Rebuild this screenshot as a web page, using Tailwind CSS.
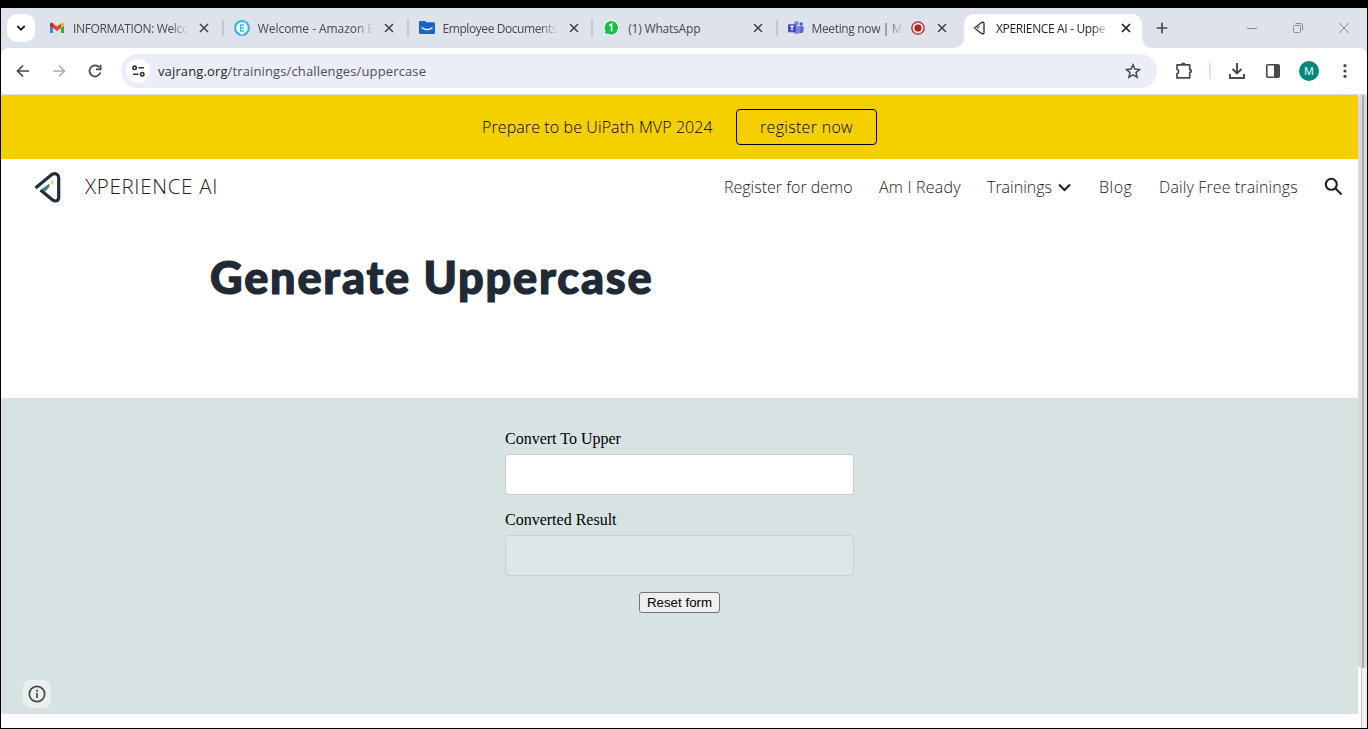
<!DOCTYPE html>
<html lang="en">
<head>
<meta charset="utf-8">
<title>XPERIENCE AI - Uppercase</title>
<script src="https://cdn.jsdelivr.net/npm/@tailwindcss/browser@4"></script>
</head>
<body class="bg-black h-[729px] w-[1368px] overflow-hidden pt-2 px-px pb-px font-['Open_Sans',sans-serif]">
<div class="flex h-[720px] w-[1366px] flex-col bg-white">

  <!-- Tab strip -->
  <div class="flex h-10 shrink-0 items-start bg-[#dee2ea] text-[12px] text-[#45494c]">
    <div class="ml-1.5 mt-1.5 flex size-7 items-center justify-center rounded-[10px] bg-white">
      <svg class="size-[10px]" viewBox="0 0 10 10" fill="none" stroke="#1f1f1f" stroke-width="1.8"><path d="M1.3 3 5 6.700 8.700 3"/></svg>
    </div>
    <div class="ml-1 flex h-10 w-[184.750px] items-center pl-2.5">
      <svg class="size-4 shrink-0" viewBox="0 0 16 16"><path fill="#4285f4" d="M1 4.500v8.500h3V7z"/><path fill="#34a853" d="M12 7v6h3V4.500z"/><path fill="#ea4335" d="M4 3.500 8 6.500l4-3V8l-4 3-4-3z"/><path fill="#c5221f" d="M1 4.500C1 2.700 2.800 2.200 4 3.300V8L1 5.800z"/><path fill="#fbbc04" d="M15 4.500C15 2.700 13.200 2.200 12 3.300V8l3-2.200z"/></svg>
      <span class="ml-2 w-[115px] overflow-hidden pt-0.5 whitespace-nowrap tracking-[-0.35px] mask-r-from-85% mask-r-to-100%">INFORMATION: Welco</span>
      <svg class="ml-[11px] size-[10px] shrink-0" viewBox="0 0 10 10" stroke="#3c4043" stroke-width="1.500"><path d="m1 1 8 8M9 1 1 9"/></svg>
      <i class="ml-auto h-4 w-0.5 bg-[#c5c7ca]"></i>
    </div>
    <div class="flex h-10 w-[184.750px] items-center pl-2.5">
      <svg class="size-4 shrink-0" viewBox="0 0 16 16"><circle cx="8" cy="8" r="8" fill="#38b9ee"/><path fill="#fff" d="M8 2.200a5.700 5.700 0 0 1 2.500 10.800L8 15l-2.500-2A5.700 5.700 0 0 1 8 2.200z"/><path fill="none" stroke="#38b9ee" stroke-width="1.300" d="M10.200 5H6.500v6h3.700M6.500 8h3.300"/></svg>
      <span class="ml-2 w-[115px] overflow-hidden pt-0.5 whitespace-nowrap tracking-[-0.05px] mask-r-from-85% mask-r-to-100%">Welcome - Amazon E</span>
      <svg class="ml-[11px] size-[10px] shrink-0" viewBox="0 0 10 10" stroke="#3c4043" stroke-width="1.500"><path d="m1 1 8 8M9 1 1 9"/></svg>
      <i class="ml-auto h-4 w-0.5 bg-[#c5c7ca]"></i>
    </div>
    <div class="flex h-10 w-[184.750px] items-center pl-2.5">
      <svg class="size-4 shrink-0" viewBox="0 0 16 16"><path fill="#1767c9" d="M0 2q0-1 1-1h5l1.500 1.200H15q1 0 1 1V13q0 1-1 1H1q-1 0-1-1z"/><path fill="#1259b4" d="M0 4.500V4h16v.5z"/><path fill="none" stroke="#fff" stroke-width="1.300" d="M2.500 7.500q5.500 4 11 .3"/></svg>
      <span class="ml-2 w-[115px] overflow-hidden pt-0.5 whitespace-nowrap tracking-[-0.42px] mask-r-from-85% mask-r-to-100%">Employee Documents</span>
      <svg class="ml-[11px] size-[10px] shrink-0" viewBox="0 0 10 10" stroke="#3c4043" stroke-width="1.500"><path d="m1 1 8 8M9 1 1 9"/></svg>
      <i class="ml-auto h-4 w-0.5 bg-[#c5c7ca]"></i>
    </div>
    <div class="flex h-10 w-[184.250px] items-center pl-2.5">
      <svg class="size-4 shrink-0" viewBox="0 0 16 16"><path fill="#fff" d="M8.200 0a7.700 7.700 0 1 1-3.600 14.500L.5 15.500l1-4A7.700 7.700 0 0 1 8.200 0z"/><path fill="#0fc144" d="M8.200 1a6.700 6.700 0 1 1-3.400 12.400L2 14l.6-2.800A6.700 6.700 0 0 1 8.200 1z"/><path fill="none" stroke="#fff" stroke-width="1.700" d="M6.300 5.500 8.600 4.200V11.500"/></svg>
      <span class="ml-2 w-[115px] overflow-hidden pl-px pt-0.5 whitespace-nowrap tracking-[-0.2px]">(1) WhatsApp</span>
      <svg class="ml-[11px] size-[10px] shrink-0" viewBox="0 0 10 10" stroke="#3c4043" stroke-width="1.500"><path d="m1 1 8 8M9 1 1 9"/></svg>
      <i class="ml-auto h-4 w-0.5 bg-[#c5c7ca]"></i>
    </div>
    <div class="flex h-10 w-[184px] items-center pl-2.5">
      <svg class="size-4 shrink-0" viewBox="0 0 16 16"><circle cx="8.500" cy="3.300" r="2.300" fill="#7b83eb"/><circle cx="13.200" cy="4" r="1.700" fill="#5059c9"/><path fill="#5b63d3" d="M10 6.300h5.500V10a2.800 2.800 0 0 1-5.500 1z"/><path fill="#7b83eb" d="M5 6.300h7.300V11a3.700 3.700 0 0 1-7.300 0z"/><rect y="4.200" width="8" height="8" rx=".7" fill="#464eb8"/><path fill="none" stroke="#fff" stroke-width="1.200" d="M2 6.300h4M4 6.300v4.200"/></svg>
      <span class="ml-2 w-[92px] overflow-hidden pt-0.5 whitespace-nowrap tracking-[-0.35px] mask-r-from-80% mask-r-to-100%">Meeting now | Mi</span>
      <svg class="ml-[7px] size-[14px] shrink-0" viewBox="0 0 14 14"><circle cx="7" cy="7" r="6.200" fill="none" stroke="#b3261e" stroke-width="1.300"/><circle cx="7" cy="7" r="3.500" fill="#b3261e"/></svg>
      <svg class="ml-[12px] size-[10px] shrink-0" viewBox="0 0 10 10" stroke="#3c4043" stroke-width="1.500"><path d="m1 1 8 8M9 1 1 9"/></svg>
    </div>
    <div class="relative ml-[2.500px] mt-1.5 flex h-[34px] w-[178px] items-center rounded-t-[10px] bg-white pb-1.5 pl-[8px] text-[#1f1f1f]">
      <svg class="absolute -left-[10px] bottom-0 size-[10px]" viewBox="0 0 10 10"><path fill="#fff" d="M10 0v10H0A10 10 0 0 0 10 0z"/></svg>
      <svg class="absolute -right-[10px] bottom-0 size-[10px]" viewBox="0 0 10 10"><path fill="#fff" d="M0 0v10h10A10 10 0 0 1 0 0z"/></svg>
      <svg class="size-4 shrink-0" viewBox="0 0 32 32" fill="none" stroke="#26313d" stroke-width="2.800"><path d="m4 17 15-12q5-2 5 3v17q0 4-5 2L7 18"/><path stroke="#3a7f7c" stroke-width="3" d="m10 17 5-4"/></svg>
      <span class="ml-2 w-[113px] overflow-hidden pt-0.5 whitespace-nowrap tracking-[-0.35px] mask-r-from-85% mask-r-to-100%">XPERIENCE AI - Uppe</span>
      <svg class="ml-[12px] size-[10px] shrink-0" viewBox="0 0 10 10" stroke="#1f1f1f" stroke-width="1.700"><path d="m1 1 8 8M9 1 1 9"/></svg>
    </div>
    <svg class="ml-[14px] mt-[14px] size-3" viewBox="0 0 12 12" stroke="#45494c" stroke-width="1.700"><path d="M6 .7v10.600M.7 6h10.600"/></svg>
    <div class="ml-[79px] mt-[15px] flex items-center gap-[36px]">
      <svg class="size-[10px]" viewBox="0 0 10 10" stroke="#8a8d91"><path d="M0 5.500h10"/></svg>
      <svg class="size-[10px]" viewBox="0 0 10 10" fill="none" stroke="#8a8d91"><rect x=".5" y="2.500" width="7" height="7" rx="1"/><path d="M2.500.5h5q2 0 2 2v5"/></svg>
      <svg class="size-[10px]" viewBox="0 0 10 10" stroke="#8a8d91"><path d="m0 0 10 10M10 0 0 10"/></svg>
    </div>
  </div>

  <!-- Toolbar -->
  <div class="shrink-0 bg-[#dee2ea]">
    <div class="flex h-[47px] items-center rounded-t-lg border-b border-[#d9dbdf] bg-white pl-[15px] pr-[15px]">
      <svg class="size-[14px]" viewBox="0 0 14 14" fill="none" stroke="#45494c" stroke-width="1.700"><path d="M13 7H2M7 1.500 1.500 7 7 12.500"/></svg>
      <svg class="ml-[22px] size-[14px]" viewBox="0 0 14 14" fill="none" stroke="#aeb0b3" stroke-width="1.700"><path d="M1 7h11M7 1.500 12.500 7 7 12.500"/></svg>
      <svg class="ml-[22px] size-[14px]" viewBox="0 0 14 14" fill="none" stroke="#45494c" stroke-width="1.800"><path d="M12.300 8.500A5.500 5.500 0 1 1 11.300 3.500"/><path d="M12.600.8v4.600H8"/></svg>
      <div class="ml-[19px] flex h-[34px] w-[1036px] items-center rounded-full bg-[#ebeef8] pl-[5px] pr-[16px]">
        <div class="flex size-6 items-center justify-center rounded-full bg-white">
          <svg class="h-3 w-[13px]" viewBox="0 0 13 12" fill="none" stroke="#303336" stroke-width="1.600"><circle cx="2.600" cy="2.800" r="1.700"/><path d="M6.500 2.800H12M1 9.200h5.500"/><circle cx="10.200" cy="9.200" r="1.700"/></svg>
        </div>
        <span class="ml-2 pt-0.5 text-[13px] tracking-[0.13px] text-[#4b4f54]"><span class="text-[#1f1f1f]">vajrang.org</span>/trainings/challenges/uppercase</span>
        <svg class="ml-auto size-4" viewBox="0 0 16 16" fill="none" stroke="#45494c" stroke-width="1.500"><path d="m8 1.800 1.900 4.300 4.600.4-3.500 3.100 1.100 4.600L8 11.800l-4.100 2.400L5 9.600 1.500 6.500l4.600-.4z"/></svg>
      </div>
      <svg class="ml-[18px] size-[18px]" viewBox="0 0 18 18" fill="none" stroke="#45494c" stroke-width="1.700"><path d="M2 2.900h12.700v4.600a1.700 1.700 0 0 1 0 3.200v5.200H2v-4.300a2.300 2.300 0 0 0 0-4.400z" stroke-linejoin="round"/><path fill="#45494c" stroke="none" d="M6 2.500a2.300 2 0 0 1 4.600 0zM15 6.800a2 2.300 0 0 1 0 4.600z"/></svg>
      <i class="ml-[16px] h-4 w-0.5 bg-[#d3e3fd]"></i>
      <svg class="ml-[18px] size-4" viewBox="0 0 16 16" fill="none" stroke="#45494c" stroke-width="1.900"><path d="M8 0v10M3.500 6 8 10.500 12.500 6M1 11v4h14v-4"/></svg>
      <svg class="ml-[21px] h-[14px] w-[14px]" viewBox="0 0 14 14"><rect x=".8" y=".8" width="12.400" height="12.400" rx="1" fill="none" stroke="#45494c" stroke-width="1.600"/><path fill="#45494c" d="M8 1h5v12H8z"/></svg>
      <span class="ml-[19px] flex size-5 items-center justify-center rounded-full bg-[#00897b] text-[11px] text-white">M</span>
      <svg class="ml-auto mr-[5px] h-[14px] w-[4px]" viewBox="0 0 4 14" fill="#45494c"><circle cx="2" cy="1.700" r="1.600"/><circle cx="2" cy="7" r="1.600"/><circle cx="2" cy="12.300" r="1.600"/></svg>
    </div>
  </div>

  <!-- Page viewport -->
  <div class="flex min-h-0 flex-1">
    <div class="relative flex w-[1357px] flex-col">
      <div class="flex h-16 shrink-0 items-center bg-[#f5d000] pb-px pl-[481px] text-[16px] font-light text-black">
        <span class="w-[254px] whitespace-nowrap tracking-[0.1px]">Prepare to be UiPath MVP 2024</span>
        <button class="mt-px h-9 w-[141px] rounded border border-black pb-px tracking-[0.3px]">register now</button>
      </div>
      <div class="flex h-14 shrink-0 items-center pl-[33px] pr-[15px] text-[16px] font-light whitespace-nowrap text-[#212121]">
        <svg class="h-8 w-7" viewBox="0 0 28 32" fill="none" stroke="#212d3a" stroke-width="3.200" stroke-linejoin="round"><path d="M1.500 17 17.500 3.800Q20 1.700 23 3.300 24.700 4.300 24.700 7v19.500q0 3-2.700 3.500-2 .2-4-1.500L6.500 19"/><path fill="#3d817e" stroke="none" d="M7 18.500 15.500 12.500V15.500L11.500 20.500z"/><path stroke="#f1cf1d" stroke-width="2" d="M18.200 9.500v4"/></svg>
        <span class="ml-[23px] pb-px text-[20.500px] tracking-[0.7px]">XPERIENCE AI</span>
        <nav class="ml-auto flex items-center gap-[26px] pb-px">
          <span class="w-[128px]">Register for demo</span>
          <span class="w-[83px] pl-px tracking-[0.2px]">Am I Ready</span>
          <span class="flex w-[86px] items-center justify-between">Trainings<svg class="mr-[2px] mt-[2px] h-[9px] w-[13px]" viewBox="0 0 13 9" fill="none" stroke="#212121" stroke-width="2.100"><path d="M1 1.500 6.500 7 12 1.500"/></svg></span>
          <span class="w-[34px] tracking-[0.5px]">Blog</span>
          <span class="w-[139px] tracking-[0.12px]">Daily Free trainings</span>
          <svg class="size-[19px]" viewBox="0 0 19 19" fill="none" stroke="#212121" stroke-width="2.100"><circle cx="7.300" cy="7.300" r="5.500"/><path d="m11.500 11.500 6 6"/></svg>
        </nav>
      </div>
      <div class="h-[183px] shrink-0 pl-[209px] pt-[32px]">
        <h1 class="font-['Lato',sans-serif] text-[45px] leading-[60px] font-black tracking-[1.820px] whitespace-nowrap text-[#212934] [-webkit-text-stroke:1.2px_#212934] [stroke-linejoin:round]">Generate Uppercase</h1>
      </div>
      <form class="flex h-[316px] shrink-0 flex-col items-center bg-[#d7e3e2] pt-[32px] font-['Liberation_Serif',serif] text-[16px] leading-[18px] text-black">
        <label class="w-[349px]">Convert To Upper
          <input class="mt-[6px] block h-[41px] w-[349px] rounded border border-[#ccc] bg-white">
        </label>
        <label class="mt-[16px] w-[349px]">Converted Result
          <input disabled class="mt-[6px] block h-[41px] w-[349px] rounded border border-[#c9cece] bg-[#dde5e6]">
        </label>
        <button type="button" class="mt-[16px] h-[21px] w-[81px] rounded-[3px] border border-[#767676] bg-[#efefef] font-['Liberation_Sans',sans-serif] text-[13.333px] leading-[18px]">Reset form</button>
      </form>
      <div class="absolute left-[22px] top-[585px] flex size-7 items-center justify-center rounded-lg bg-[#eaf0f0]">
        <svg class="size-[18px]" viewBox="0 0 18 18" fill="none" stroke="#40474a" stroke-width="1.700"><circle cx="9" cy="9" r="7.700"/><path d="M9 8v5M9 4.800v1.900"/></svg>
      </div>
    </div>
    <div class="flex w-[9px] justify-end bg-white">
      <div class="h-full w-[6px] border-l border-[#c4c4c4] bg-[#f1f1f1]"></div>
    </div>
    <div class="relative w-0"><div class="absolute right-0 top-0 flex h-[573px] w-[9px] rounded-[4px] bg-[#dadada]"><i class="ml-[4px] h-full w-[2px] bg-[#acacac]"></i></div></div>
  </div>
</div>
</body>
</html>
